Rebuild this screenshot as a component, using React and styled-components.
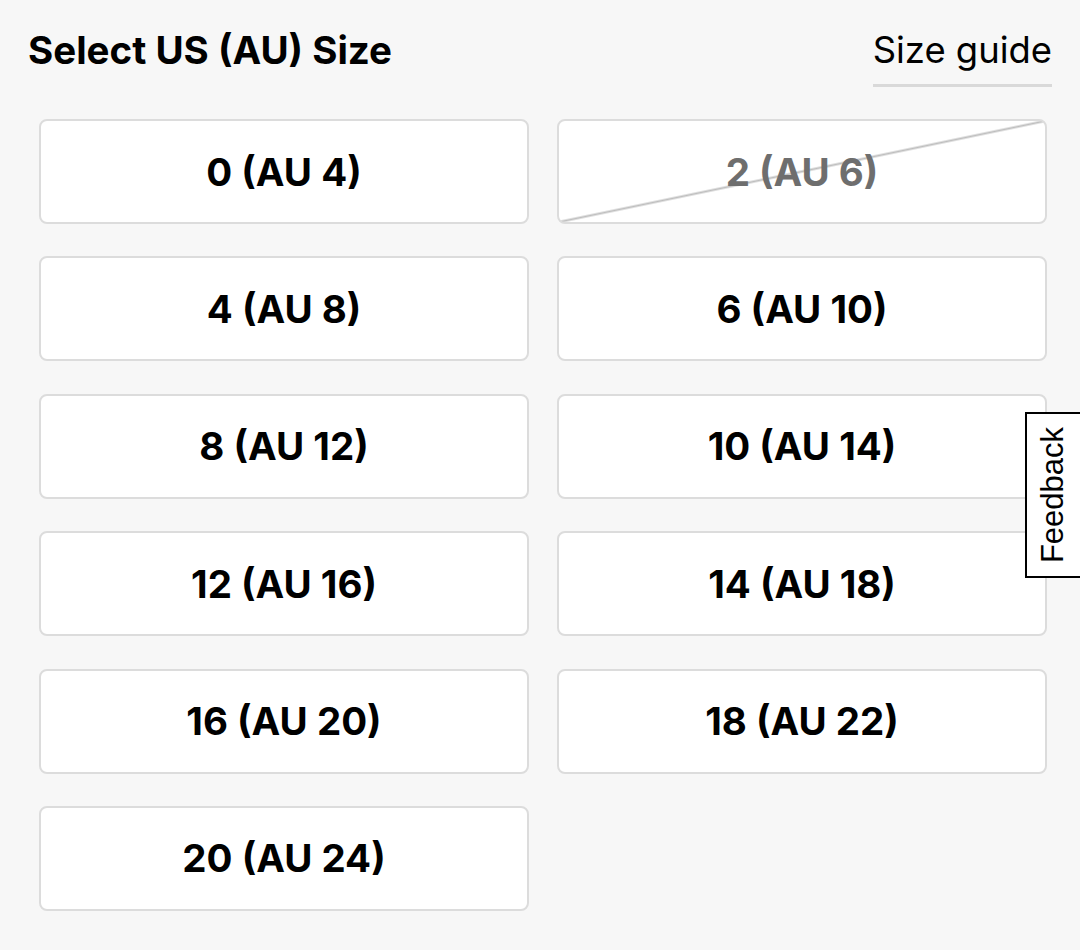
import React from "react";
import styled, { createGlobalStyle } from "styled-components";

const Global = createGlobalStyle`
  html, body { margin: 0; padding: 0; background: #f7f7f7; }
  body { font-family: Inter, "Liberation Sans", sans-serif; color: #000; }
`;

const Page = styled.div`
  position: relative;
  width: 1080px;
  height: 950px;
  background: #f7f7f7;
  overflow: hidden;
`;

const Header = styled.div`
  display: flex;
  justify-content: space-between;
  align-items: flex-start;
  padding: 26px 28px 0 28px;
  height: 93px;
  box-sizing: border-box;
`;

const Title = styled.h2`
  margin: 0;
  font-size: 38.5px;
  font-weight: 700;
  line-height: 48px;
  color: #000;
`;

const GuideLink = styled.a`
  font-size: 36.4px;
  font-weight: 400;
  line-height: 48px;
  color: #000;
  text-decoration: none;
  padding-bottom: 10px;
  border-bottom: 3px solid #d9d9d9;
`;

const Grid = styled.div`
  display: grid;
  grid-template-columns: 490px 490px;
  column-gap: 28px;
  row-gap: 32.4px;
  padding: 26px 0 0 39px;
`;

const SizeButton = styled.button`
  height: 105px;
  box-sizing: border-box;
  border: 2px solid #dcdcdc;
  border-radius: 8px;
  background: ${(p) =>
    p.$disabled
      ? "linear-gradient(to bottom right, #fff calc(50% - 2px), #bdbdbd 50%, #fff calc(50% + 2px))"
      : "#fff"};
  font-family: inherit;
  font-size: 38.5px;
  font-weight: 700;
  color: ${(p) => (p.$disabled ? "#6e6e6e" : "#000")};
  cursor: pointer;
  display: flex;
  align-items: center;
  justify-content: center;
  padding: 0;
`;

const FeedbackTab = styled.div`
  position: absolute;
  left: 1025px;
  top: 412px;
  width: 55px;
  height: 166px;
  box-sizing: border-box;
  border: 2px solid #000;
  border-right: none;
  background: #fff;
  display: flex;
  align-items: center;
  justify-content: center;
`;

const FeedbackText = styled.span`
  transform: rotate(-90deg);
  font-family: "Liberation Sans", Arial, sans-serif;
  font-size: 31px;
  color: #000;
  white-space: nowrap;
`;

const sizes = [
  { us: 0, au: 4 },
  { us: 2, au: 6, disabled: true },
  { us: 4, au: 8 },
  { us: 6, au: 10 },
  { us: 8, au: 12 },
  { us: 10, au: 14 },
  { us: 12, au: 16 },
  { us: 14, au: 18 },
  { us: 16, au: 20 },
  { us: 18, au: 22 },
  { us: 20, au: 24 },
];

export default function App() {
  return (
    <Page>
      <Global />
      <Header>
        <Title>Select US (AU) Size</Title>
        <GuideLink href="#">Size guide</GuideLink>
      </Header>
      <Grid>
        {sizes.map((s) => (
          <SizeButton key={s.us} $disabled={s.disabled}>
            {s.us} (AU {s.au})
          </SizeButton>
        ))}
      </Grid>
      <FeedbackTab>
        <FeedbackText>Feedback</FeedbackText>
      </FeedbackTab>
    </Page>
  );
}
